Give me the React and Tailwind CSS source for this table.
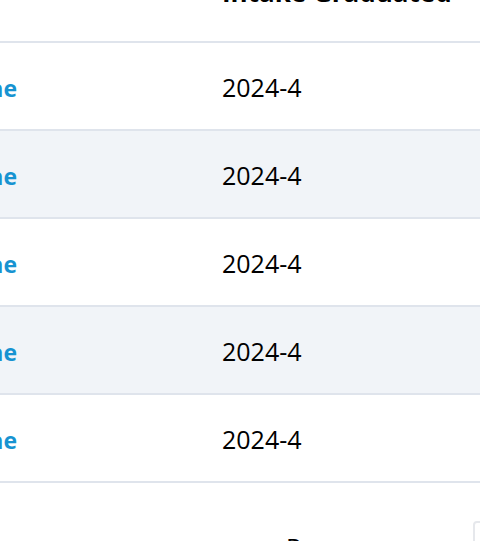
const rows = [
  { name: "Anne", intake: "2024-4" },
  { name: "Anne", intake: "2024-4" },
  { name: "Anne", intake: "2024-4" },
  { name: "Anne", intake: "2024-4" },
  { name: "Anne", intake: "2024-4" },
];

export default function App() {
  return (
    <div className="w-[480px] h-[541px] overflow-hidden bg-white font-['Open_Sans',sans-serif] text-[25px] text-black">
      {/* Header */}
      <div className="flex h-[93px] -mt-[50px] items-center border-b-2 border-[#dfe4ec]">
        <div className="w-[222px] shrink-0" />
        <div className="whitespace-nowrap font-bold text-[26px] -mt-[6px]">Intake Graduated</div>
      </div>

      {/* Body */}
      {rows.map((row, i) => (
        <div
          key={i}
          className={`flex h-[88px] items-center border-b-2 border-[#dfe4ec] ${
            i % 2 === 1 ? "bg-[#f1f4f8]" : "bg-white"
          }`}
        >
          <div className="w-[222px] shrink-0 flex justify-end pr-[205px] pt-[5px]">
            <span className="font-bold text-[23px] text-[#1793d1] whitespace-nowrap">{row.name}</span>
          </div>
          <div className="whitespace-nowrap pt-[3px]">{row.intake}</div>
        </div>
      ))}

      {/* Pagination */}
      <div className="flex items-start h-[60px] pt-[38px]">
        <div className="w-[286px] shrink-0" />
        <div className="leading-none pt-[14px]">P</div>
        <div className="flex-1" />
        <div className="w-[40px] h-[40px] ml-auto -mr-[33px] border-2 border-[#e6e8ec] rounded" />
      </div>
    </div>
  );
}
